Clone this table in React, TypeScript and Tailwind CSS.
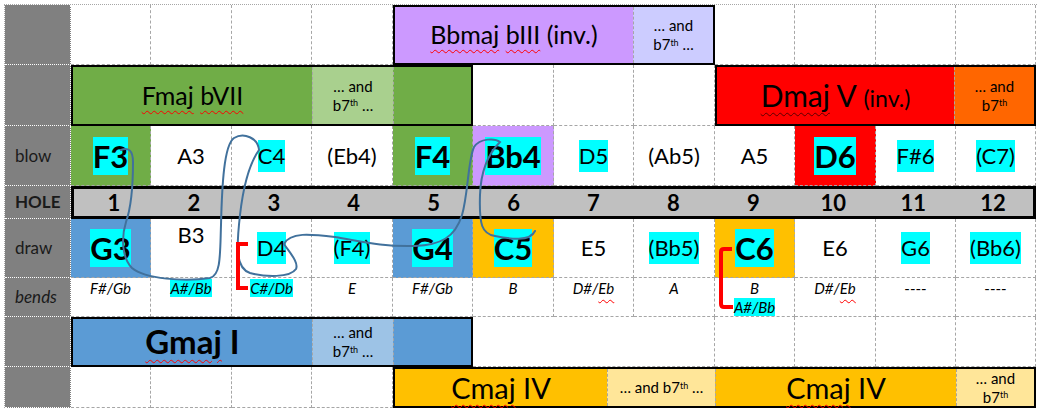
import React from 'react';

type Note = { t: string; bg?: string; bold?: boolean; hl?: boolean; top?: boolean };

const blow: Note[] = [
  { t: 'F3', bg: 'bg-[#70ad47]', bold: true, hl: true },
  { t: 'A3' },
  { t: 'C4', hl: true },
  { t: '(Eb4)' },
  { t: 'F4', bg: 'bg-[#70ad47]', bold: true, hl: true },
  { t: 'Bb4', bg: 'bg-[#cc99ff]', bold: true, hl: true },
  { t: 'D5', hl: true },
  { t: '(Ab5)' },
  { t: 'A5' },
  { t: 'D6', bg: 'bg-[#ff0000]', bold: true, hl: true },
  { t: 'F#6', hl: true },
  { t: '(C7)', hl: true },
];

const draw: Note[] = [
  { t: 'G3', bg: 'bg-[#5b9bd5]', bold: true, hl: true },
  { t: 'B3', top: true },
  { t: 'D4', hl: true },
  { t: '(F4)', hl: true },
  { t: 'G4', bg: 'bg-[#5b9bd5]', bold: true, hl: true },
  { t: 'C5', bg: 'bg-[#ffc000]', bold: true, hl: true },
  { t: 'E5' },
  { t: '(Bb5)', hl: true },
  { t: 'C6', bg: 'bg-[#ffc000]', bold: true, hl: true },
  { t: 'E6' },
  { t: 'G6', hl: true },
  { t: '(Bb6)', hl: true },
];

const cellBorder = 'border-r border-b border-dashed border-[#a6a6a6]';
const squiggle = 'underline decoration-wavy decoration-[#ff0000] decoration-1 underline-offset-[5px]';

function Side({ children, className = '' }: { children?: React.ReactNode; className?: string }) {
  return (
    <div className={`bg-[#808080] border-r border-b border-dotted border-white flex items-center pl-[10px] text-[17px] text-[#1a1a1a] ${className}`}>
      {children}
    </div>
  );
}

function Empty({ className = '' }: { className?: string }) {
  return <div className={`${cellBorder} ${className}`} />;
}

function NoteCell({ n }: { n: Note }) {
  const size = n.bold ? 'text-[31px] font-bold leading-[38px]' : 'text-[22px] leading-[32px]';
  return (
    <div className={`${cellBorder} ${n.bg ?? ''} flex justify-center ${n.top ? 'items-start pt-0' : 'items-center'}`}>
      <span className={`${size} ${n.hl ? 'bg-[#00ffff]' : ''}`}>{n.t}</span>
    </div>
  );
}

function AndB7({ trail = true, className = '' }: { trail?: boolean; className?: string }) {
  return (
    <div className={`flex flex-col items-center justify-center text-[15px] leading-[19px] ${className}`}>
      <span>… and</span>
      <span>
        b7<sup className="text-[9px]">th</sup>
        {trail ? ' …' : ''}
      </span>
    </div>
  );
}

function Bend({ t, hl, eb }: { t: string; hl?: boolean; eb?: boolean }) {
  return (
    <span className={`italic text-[15px] leading-[18px] ${hl ? 'bg-[#00ffff]' : ''}`}>
      {eb ? (
        <>
          D#/<span className={squiggle}>Eb</span>
        </>
      ) : (
        t
      )}
    </span>
  );
}

export default function App() {
  const bends: React.ReactNode[] = [
    <Bend t="F#/Gb" />,
    <Bend t="A#/Bb" hl />,
    <Bend t="C#/Db" hl />,
    <Bend t="E" />,
    <Bend t="F#/Gb" />,
    <Bend t="B" />,
    <Bend t="" eb />,
    <Bend t="A" />,
    <div className="flex flex-col items-center gap-[1px]">
      <Bend t="B" />
      <Bend t="A#/Bb" hl />
    </div>,
    <Bend t="" eb />,
    <span className="text-[15px] leading-[18px]">----</span>,
    <span className="text-[15px] leading-[18px]">----</span>,
  ];

  return (
    <div className="relative w-[1037px] h-[408px] bg-white overflow-hidden font-['Lato',sans-serif] text-black">
      <div className="ml-[4px] mt-[4px] grid grid-cols-[66px_80px_81px_80px_81px_80px_81px_80px_81px_80px_81px_80px_80px] grid-rows-[60px_61px_60px_33px_59px_39px_50px_41px] border-t border-l border-dotted border-[#a6a6a6]">
        {/* row 1 */}
        <Side />
        <Empty />
        <Empty />
        <Empty />
        <Empty />
        <div className="col-span-4 border-2 border-black flex">
          <div className="flex-1 bg-[#cc99ff] flex items-center justify-center text-[25px]">
            <span>
              <span className={squiggle}>Bbmaj</span> <span className={squiggle}>bIII</span> (inv.)
            </span>
          </div>
          <AndB7 className="w-[80px] bg-[#ccccff] border-l border-dashed border-[#a6a6a6]" />
        </div>
        <Empty />
        <Empty />
        <Empty />
        <Empty />

        {/* row 2 */}
        <Side />
        <div className="col-span-5 border-2 border-black flex">
          <div className="flex-1 bg-[#70ad47] flex items-center justify-center text-[25px]">
            <span>
              <span className={squiggle}>Fmaj</span> <span className={squiggle}>bVII</span>
            </span>
          </div>
          <AndB7 className="w-[81px] bg-[#a9d08e] border-l border-dashed border-[#a6a6a6]" />
          <div className="w-[78px] bg-[#70ad47] border-l border-dashed border-[#a6a6a6]" />
        </div>
        <Empty />
        <Empty />
        <Empty />
        <div className="col-span-4 border-2 border-black flex">
          <div className="flex-1 bg-[#ff0000] flex items-center justify-center">
            <span className="text-[30px]">
              <span className="underline decoration-wavy decoration-[#5a0000] decoration-1 underline-offset-[5px]">Dmaj</span> V{' '}
              <span className="text-[23px]">(inv.)</span>
            </span>
          </div>
          <AndB7 trail={false} className="w-[80px] bg-[#ff6600] border-l border-dashed border-[#a6a6a6]" />
        </div>

        {/* blow */}
        <Side>blow</Side>
        {blow.map((n, i) => (
          <NoteCell key={i} n={n} />
        ))}

        {/* hole */}
        <Side className="font-bold text-[14px]">HOLE</Side>
        <div className="col-span-12 border-[3px] border-black bg-[#c0c0c0] flex">
          {Array.from({ length: 12 }, (_, i) => (
            <div key={i} className="flex-1 flex items-center justify-center text-[22px] font-bold">
              {i + 1}
            </div>
          ))}
        </div>

        {/* draw */}
        <Side>draw</Side>
        {draw.map((n, i) => (
          <NoteCell key={i} n={n} />
        ))}

        {/* bends */}
        <Side className="italic">bends</Side>
        {bends.map((b, i) => (
          <div key={i} className={`${cellBorder} flex justify-center items-start pt-[1px]`}>
            {b}
          </div>
        ))}

        {/* row 7 */}
        <Side />
        <div className="col-span-5 border-2 border-black flex">
          <div className="flex-1 bg-[#5b9bd5] flex items-center justify-center text-[33px] font-bold">
            <span>
              <span className={squiggle}>Gmaj</span> I
            </span>
          </div>
          <AndB7 className="w-[81px] bg-[#9dc3e6] border-l border-dashed border-[#a6a6a6]" />
          <div className="w-[78px] bg-[#5b9bd5] border-l border-dashed border-[#a6a6a6]" />
        </div>
        <Empty className="col-span-3" />
        <Empty />
        <Empty />
        <Empty />
        <Empty />

        {/* row 8 */}
        <Side />
        <Empty />
        <Empty />
        <Empty />
        <Empty />
        <div className="col-span-8 border-2 border-black flex">
          <div className="w-[212px] bg-[#ffc000] flex items-center justify-center text-[29px]">
            <span>
              <span className={squiggle}>Cmaj</span> IV
            </span>
          </div>
          <div className="w-[108px] bg-[#ffe699] border-l border-dashed border-[#a6a6a6] flex items-center justify-center text-[15px]">
            <span>
              … and b7<sup className="text-[9px]">th</sup> …
            </span>
          </div>
          <div className="w-[241px] bg-[#ffc000] border-l border-dashed border-[#a6a6a6] flex items-center justify-center text-[29px]">
            <span>
              <span className={squiggle}>Cmaj</span> IV
            </span>
          </div>
          <AndB7 trail={false} className="flex-1 bg-[#ffe699] border-l border-dashed border-[#a6a6a6]" />
        </div>
      </div>

      {/* annotation strokes drawn over the table */}
      <svg className="absolute inset-0 pointer-events-none" width="1037" height="408" viewBox="0 0 1037 408" fill="none">
        <path
          d="M 121 150 C 128 147, 133 150, 133 162 C 133 185, 132 205, 126 222 C 121 238, 122 258, 132 268 C 145 279, 185 282, 210 278 C 221 275, 220 255, 221 225 C 222 185, 224 145, 234 138 C 244 132, 258 138, 259 150 C 252 160, 244 180, 240 215 C 236 250, 236 268, 250 273 C 265 277, 290 278, 296 269 C 299 262, 289 252, 284 244 C 290 232, 310 234, 335 237 C 360 241, 380 247, 415 246 C 440 245, 455 238, 462 215 C 468 195, 468 160, 474 147 C 480 138, 495 138, 500 142 C 492 150, 481 165, 480 195 C 479 225, 482 234, 495 236 C 510 239, 530 242, 535 231"
          stroke="#41719c"
          strokeWidth="2"
          strokeLinecap="round"
        />
        <path d="M 248 244 L 238 244 L 238 288 L 248 288" stroke="#ff0000" strokeWidth="4" />
        <path d="M 732 249 L 724 249 Q 721 249 721 252 L 721 304 Q 721 307 724 307 L 733 307" stroke="#ff0000" strokeWidth="4" />
      </svg>
    </div>
  );
}
